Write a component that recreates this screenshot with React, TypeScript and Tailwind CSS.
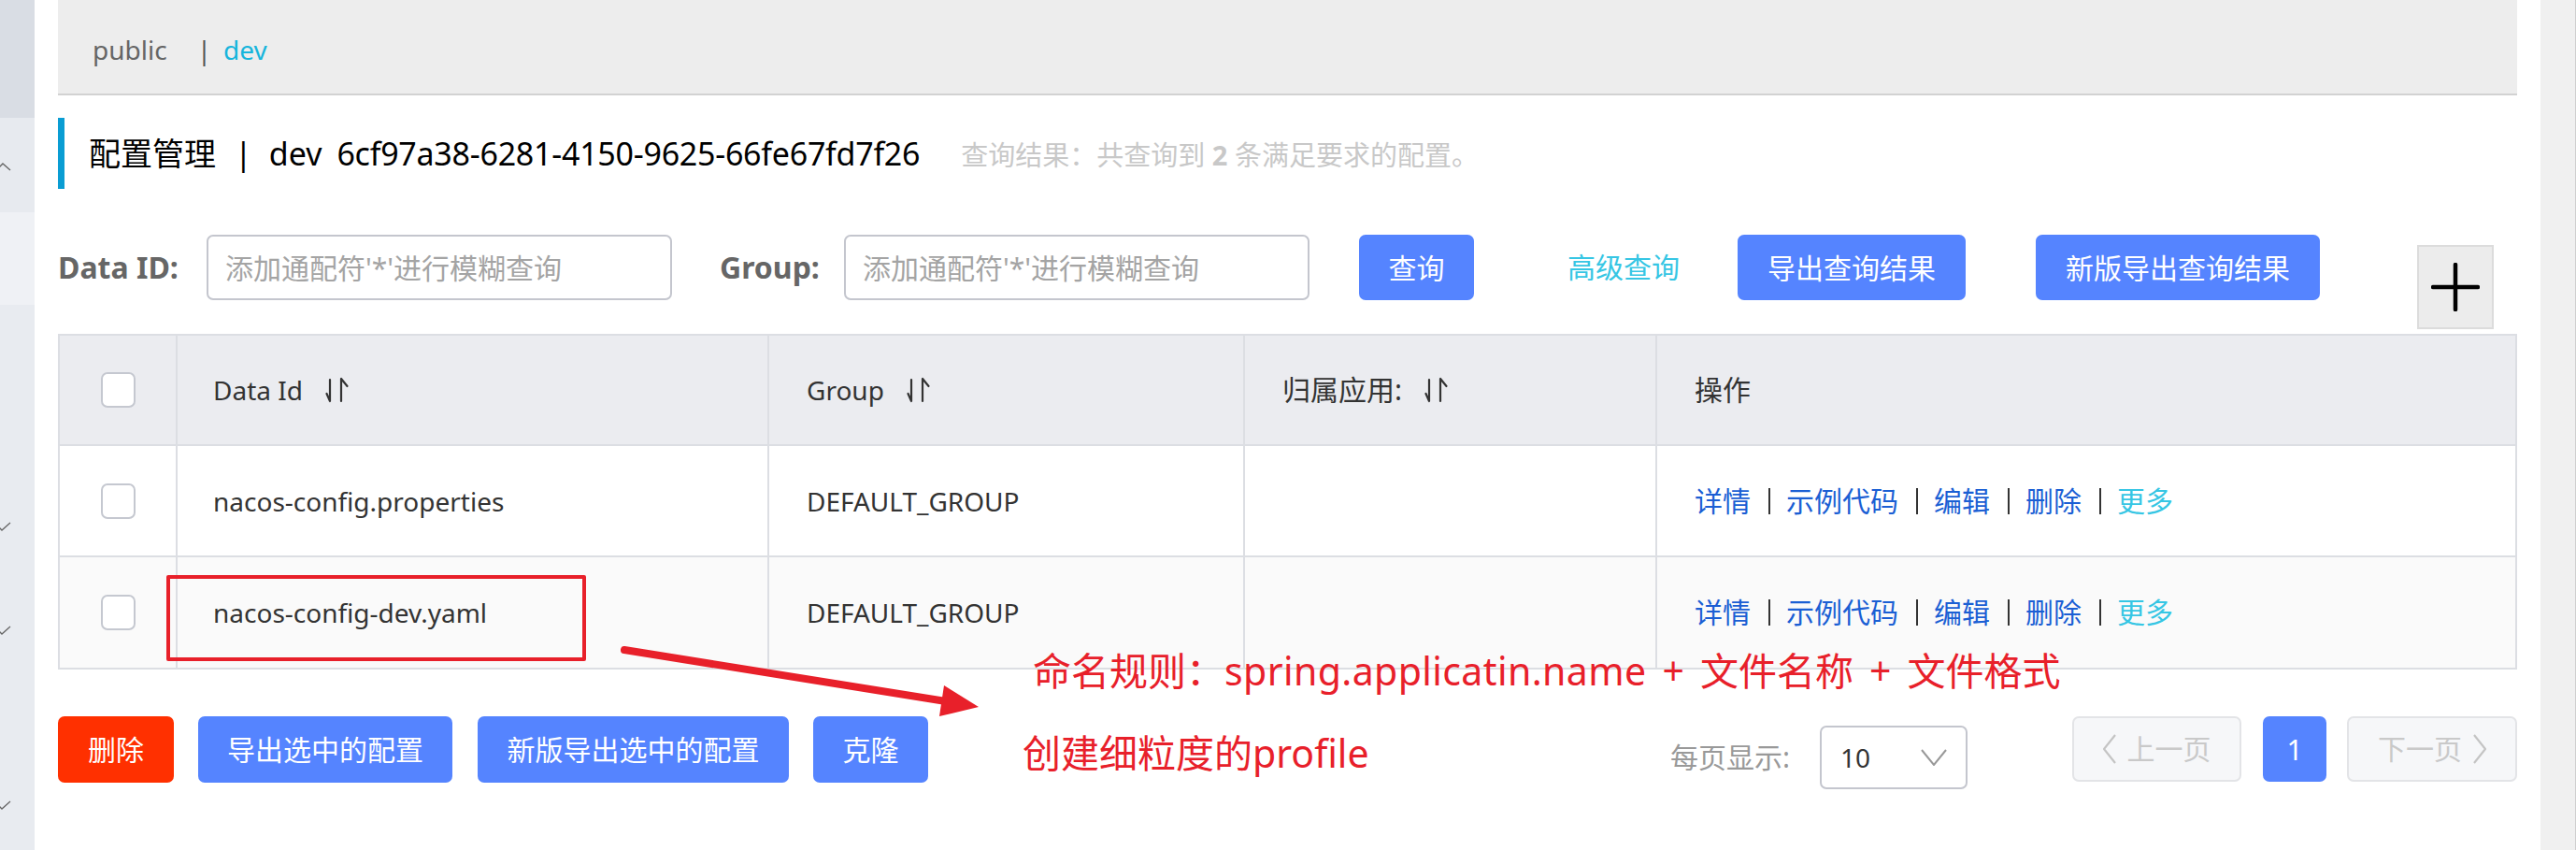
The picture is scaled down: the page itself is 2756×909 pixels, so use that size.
import React from "react";

const rowGrid = "grid grid-cols-[124px_633px_509px_441px_1fr]";

function Sidebar() {
  return (
    <aside className="flex w-[37px] shrink-0 flex-col">
      <div className="h-[126px] bg-[#d9dde4]" />
      <div className="h-[101px] bg-[#e7eaef] pt-[46px]">
        <svg width="12" height="12" viewBox="0 0 12 12" fill="none" stroke="#666" strokeWidth="1.4">
          <polyline points="-2,8 3,3 11,10" />
        </svg>
      </div>
      <div className="h-[99px] bg-[#eff1f5]" />
      <div className="flex flex-1 flex-col bg-[#e8ebf0] pt-[231px]">
        <Tick />
        <Tick className="mt-[99px]" />
        <Tick className="mt-[175px]" />
      </div>
    </aside>
  );
}

function Tick({ className = "" }: { className?: string }) {
  return (
    <svg className={className} width="12" height="12" viewBox="0 0 12 12" fill="none" stroke="#666" strokeWidth="1.3">
      <polyline points="-1,7 2,10 11,2" />
    </svg>
  );
}

function SortIcon() {
  return (
    <svg className="ml-[24px] shrink-0" width="26" height="28" viewBox="0 0 26 28" fill="none" stroke="#333" strokeWidth="2.2" strokeLinecap="round">
      <path d="M5 3v23M5 26 1.5 18" />
      <path d="M17 26V2M17 2l6.5 8" />
    </svg>
  );
}

function Checkbox() {
  return <span className="block h-[38px] w-[37px] rounded-[7px] border-2 border-[#c5c8d0] bg-white" />;
}

function Actions() {
  const sep = <span className="ml-[19px] mr-[17px] inline-block h-[28px] w-[2px] bg-[#333]" />;
  return (
    <div className="flex items-center text-[30px] leading-none text-[#1b5fd4]">
      <span>详情</span>
      {sep}
      <span>示例代码</span>
      {sep}
      <span>编辑</span>
      {sep}
      <span>删除</span>
      {sep}
      <span className="text-[#36c6e4]">更多</span>
    </div>
  );
}

const rows = [
  { id: "nacos-config.properties", group: "DEFAULT_GROUP", bg: "bg-white", h: "h-[119px] border-b-2" },
  { id: "nacos-config-dev.yaml", group: "DEFAULT_GROUP", bg: "bg-[#fafafa]", h: "h-[118px]" },
];

function ConfigTable() {
  return (
    <div className="mt-[36px] border-2 border-[#dcdee3] text-[#333]">
      <div className={`${rowGrid} h-[118px] border-b-2 border-[#dcdee3] bg-[#ebecf0]`}>
        <div className="flex items-center justify-center">
          <Checkbox />
        </div>
        <div className="flex items-center border-l-2 border-[#dcdee3] pl-[38px] text-[28px] leading-none">
          Data Id
          <SortIcon />
        </div>
        <div className="flex items-center border-l-2 border-[#dcdee3] pl-[40px] text-[28px] leading-none">
          Group
          <SortIcon />
        </div>
        <div className="flex items-center border-l-2 border-[#dcdee3] pl-[40px] text-[30px] leading-none">
          归属应用:
          <SortIcon />
        </div>
        <div className="flex items-center border-l-2 border-[#dcdee3] pl-[40px] text-[30px] leading-none">操作</div>
      </div>
      {rows.map((r) => (
        <div key={r.id} className={`${rowGrid} ${r.h} ${r.bg} border-[#dcdee3]`}>
          <div className="flex items-center justify-center">
            <Checkbox />
          </div>
          <div className="flex items-center border-l-2 border-[#dcdee3] pl-[38px] text-[28px] leading-none">{r.id}</div>
          <div className="flex items-center border-l-2 border-[#dcdee3] pl-[40px] text-[28px] leading-none">{r.group}</div>
          <div className="border-l-2 border-[#dcdee3]" />
          <div className="flex items-center border-l-2 border-[#dcdee3] pl-[40px]">
            <Actions />
          </div>
        </div>
      ))}
    </div>
  );
}

function SearchBar() {
  return (
    <div className="mt-[49px] flex h-[70px] items-center">
      <span className="w-[159px] shrink-0 text-[32px] font-bold leading-none text-[#666]">Data ID:</span>
      <input
        className="h-[70px] w-[498px] shrink-0 rounded-[7px] border-2 border-[#c4c6ce] px-[18px] text-[30px] outline-none placeholder:text-[#a4a4a4]"
        placeholder="添加通配符'*'进行模糊查询"
      />
      <span className="ml-[51px] w-[133px] shrink-0 text-[32px] font-bold leading-none text-[#666]">Group:</span>
      <input
        className="h-[70px] w-[498px] shrink-0 rounded-[7px] border-2 border-[#c4c6ce] px-[18px] text-[30px] outline-none placeholder:text-[#a4a4a4]"
        placeholder="添加通配符'*'进行模糊查询"
      />
      <button className="ml-[53px] h-[70px] w-[123px] shrink-0 rounded-[7px] bg-[#5584ff] text-[30px] text-white">查询</button>
      <span className="ml-[100px] shrink-0 text-[30px] leading-none text-[#36c6e4]">高级查询</span>
      <button className="ml-[62px] h-[70px] w-[244px] shrink-0 rounded-[7px] bg-[#5584ff] text-[30px] text-white">导出查询结果</button>
      <button className="ml-[75px] h-[70px] w-[304px] shrink-0 rounded-[7px] bg-[#5584ff] text-[30px] text-white">新版导出查询结果</button>
      <button className="ml-[104px] mt-[11px] flex h-[90px] w-[82px] shrink-0 items-center justify-center self-start border-2 border-[#dcdcdc] bg-[#ececec]">
        <svg width="52" height="52" viewBox="0 0 52 52" stroke="#000" strokeWidth="4.5" strokeLinecap="round">
          <line x1="2" y1="26" x2="50" y2="26" />
          <line x1="26" y1="2" x2="26" y2="50" />
        </svg>
      </button>
    </div>
  );
}

function PageButton({ children, className = "" }: { children: React.ReactNode; className?: string }) {
  return (
    <button
      className={`flex h-[70px] items-center justify-center gap-[12px] rounded-[7px] border-2 border-[#e3e4e7] bg-[#f6f7f9] text-[30px] leading-none text-[#c9c9c9] ${className}`}
    >
      {children}
    </button>
  );
}

function BottomBar() {
  return (
    <div className="mt-[50px] flex items-start">
      <button className="h-[71px] w-[124px] rounded-[7px] bg-[#ff3000] text-[30px] text-white">删除</button>
      <button className="ml-[26px] h-[71px] w-[272px] rounded-[7px] bg-[#5584ff] text-[30px] text-white">导出选中的配置</button>
      <button className="ml-[27px] h-[71px] w-[333px] rounded-[7px] bg-[#5584ff] text-[30px] text-white">新版导出选中的配置</button>
      <button className="ml-[26px] h-[71px] w-[123px] rounded-[7px] bg-[#5584ff] text-[30px] text-white">克隆</button>

      <div className="ml-auto flex items-start">
        <div className="mt-[10px] flex h-[68px] items-center">
          <span className="text-[30px] leading-none text-[#999]">每页显示:</span>
          <div className="ml-[32px] flex h-[68px] w-[158px] items-center justify-between rounded-[7px] border-2 border-[#c4c6ce] pl-[20px] pr-[20px]">
            <span className="text-[28px] leading-none text-[#333]">10</span>
            <svg width="28" height="18" viewBox="0 0 28 18" fill="none" stroke="#999" strokeWidth="2">
              <polyline points="1,1 14,17 27,1" />
            </svg>
          </div>
        </div>
        <PageButton className="ml-[112px] w-[181px]">
          <svg width="14" height="32" viewBox="0 0 14 32" fill="none" stroke="#c4c4c4" strokeWidth="2.2">
            <polyline points="13,1 1,16 13,31" />
          </svg>
          <span>上一页</span>
        </PageButton>
        <button className="ml-[23px] h-[70px] w-[68px] rounded-[7px] bg-[#5584ff] text-[30px] text-white">1</button>
        <PageButton className="ml-[22px] w-[182px]">
          <span>下一页</span>
          <svg width="14" height="32" viewBox="0 0 14 32" fill="none" stroke="#c4c4c4" strokeWidth="2.2">
            <polyline points="1,1 13,16 1,31" />
          </svg>
        </PageButton>
      </div>
    </div>
  );
}

function Annotations() {
  return (
    <>
      <div className="pointer-events-none absolute left-[178px] top-[615px] h-[92px] w-[449px] rounded-[2px] border-4 border-[#e8202a]" />
      <svg className="pointer-events-none absolute left-[660px] top-[685px]" width="395" height="90" viewBox="0 0 395 90">
        <line x1="8" y1="10" x2="352" y2="65" stroke="#e8202a" strokeWidth="8" strokeLinecap="round" />
        <polygon points="387,71 350,48 345,81" fill="#e8202a" />
      </svg>
      <div className="pointer-events-none absolute left-[1105px] top-[697px] flex whitespace-nowrap text-[41px] leading-none text-[#e8202a]">
        <span>命名规则：</span>
        <span className="tracking-[0.4px]">spring.applicatin.name</span>
        <span className="mx-[17px]">+</span>
        <span>文件名称</span>
        <span className="mx-[17px]">+</span>
        <span>文件格式</span>
      </div>
      <div className="pointer-events-none absolute left-[1094px] top-[785px] whitespace-nowrap text-[41px] leading-none text-[#e8202a]">
        创建细粒度的profile
      </div>
    </>
  );
}

export default function App() {
  return (
    <div className="relative flex h-[909px] w-full overflow-hidden bg-white font-[family-name:'Noto_Sans','Noto_Sans_CJK_SC',sans-serif]">
      <Sidebar />
      <main className="min-w-0 flex-1 px-[25px]">
        <div className="flex h-[102px] items-center border-b-2 border-[#d2d2d2] bg-[#ededed] pl-[37px] pt-[6px] text-[28px] leading-none">
          <span className="text-[#666]">public</span>
          <span className="ml-[32px] text-[#555]">|</span>
          <span className="ml-[13px] text-[#17b5dc]">dev</span>
        </div>

        <div className="mt-[24px] flex h-[76px] items-center">
          <span className="h-full w-[7px] bg-[#0a9dd3]" />
          <div className="ml-[26px] flex items-baseline text-[34px] leading-none text-black">
            <span>配置管理</span>
            <span className="ml-[20px]">|</span>
            <span className="ml-[18px]">dev</span>
            <span className="ml-[16px] tracking-[-0.25px]">6cf97a38-6281-4150-9625-66fe67fd7f26</span>
            <span className="ml-[44px] text-[29px] text-[#c8c8c8]">
              查询结果：共查询到 <b>2</b> 条满足要求的配置。
            </span>
          </div>
        </div>

        <SearchBar />
        <ConfigTable />
        <BottomBar />
      </main>
      <div className="w-[38px] shrink-0 border-r border-[#cfcfcf] bg-[#f0f0f0]" />
      <Annotations />
    </div>
  );
}
